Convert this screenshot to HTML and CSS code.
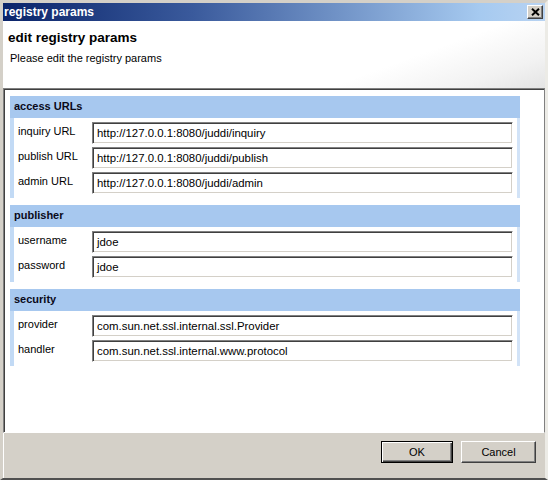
FILE: index.html
```html
<!DOCTYPE html>
<html>
<head>
<meta charset="utf-8">
<link rel="stylesheet" href="styles.css">
</head>
<body>
<div class="window">
  <div class="titlebar">
    <span class="title">registry params</span>
    <span class="close"><svg width="9" height="8" viewBox="0 0 9 8"><path d="M1 0.8 L8 7.2 M8 0.8 L1 7.2" stroke="#000" stroke-width="2" fill="none"/></svg></span>
  </div>
  <div class="header">
    <div class="heading">edit registry params</div>
    <div class="subheading">Please edit the registry params</div>
  </div>
  <div class="panel">
    <div class="section">
      <div class="band">access URLs</div>
      <div class="rows">
        <label>inquiry URL</label><div class="field">http://127.0.0.1:8080/juddi/inquiry</div>
        <label>publish URL</label><div class="field">http://127.0.0.1:8080/juddi/publish</div>
        <label>admin URL</label><div class="field">http://127.0.0.1:8080/juddi/admin</div>
      </div>
    </div>
    <div class="section">
      <div class="band">publisher</div>
      <div class="rows">
        <label>username</label><div class="field">jdoe</div>
        <label>password</label><div class="field">jdoe</div>
      </div>
    </div>
    <div class="section">
      <div class="band">security</div>
      <div class="rows">
        <label>provider</label><div class="field">com.sun.net.ssl.internal.ssl.Provider</div>
        <label>handler</label><div class="field">com.sun.net.ssl.internal.www.protocol</div>
      </div>
    </div>
  </div>
  <div class="footer">
    <button class="btn default">OK</button>
    <button class="btn">Cancel</button>
  </div>
</div>
</body>
</html>
```
FILE: styles.css
```css
html, body {
  margin: 0;
  padding: 0;
  background: #d4d0c8;
}
body {
  width: 548px;
  height: 480px;
  overflow: hidden;
  font-family: "Liberation Sans", Arial, sans-serif;
  font-size: 11px;
  color: #000;
}
.window {
  width: 548px;
  height: 480px;
  box-sizing: border-box;
  background: #d4d0c8;
  border-top: 3px solid #d4d0c8;
  border-left: 3px solid #d4d0c8;
  border-right: 3px solid #ecebe6;
  border-bottom: 2px solid #505050;
  box-shadow: inset 1px 0 0 #ffffff;
  display: flex;
  flex-direction: column;
}
.titlebar {
  height: 18px;
  flex: none;
  background: linear-gradient(to right, #0a246a 0%, #3a5a9c 35%, #a6caf0 88%, #b8d3f2 100%);
  display: flex;
  align-items: center;
  justify-content: space-between;
  padding: 0 2px 0 1px;
}
.title {
  color: #fff;
  font-weight: bold;
  font-size: 12px;
}
.close {
  width: 16px;
  height: 14px;
  box-sizing: border-box;
  background: #d4d0c8;
  border-top: 1px solid #ffffff;
  border-left: 1px solid #ffffff;
  border-right: 1px solid #404040;
  border-bottom: 1px solid #404040;
  box-shadow: inset -1px -1px 0 #808080;
  display: flex;
  align-items: center;
  justify-content: center;
}
.close svg { display: block; }
.header {
  height: 67px;
  flex: none;
  box-sizing: border-box;
  background: linear-gradient(160deg, #ffffff 70%, #f2f2f2 88%, #e4e4e4 100%);
  padding: 9px 5px 0 5px;
}
.heading {
  font-size: 13.5px;
  font-weight: bold;
  line-height: 16px;
}
.subheading {
  margin-top: 6px;
  margin-left: 2px;
  line-height: 13px;
}
.panel {
  height: 345px;
  flex: none;
  box-sizing: border-box;
  background: #ffffff;
  border-top: 1px solid #808080;
  border-left: 1px solid #808080;
  border-right: 1px solid #808080;
  border-bottom: 1px solid #ffffff;
  box-shadow: inset 1px 1px 0 #404040;
  padding: 7px 0 0 6px;
}
.section {
  width: 510px;
  margin-bottom: 7px;
}
.band {
  height: 22px;
  box-sizing: border-box;
  background: #a7c8ef;
  font-weight: bold;
  line-height: 20px;
  padding: 0 4px;
  color: #0a0a1a;
}
.rows {
  display: grid;
  grid-template-columns: 74px 1fr;
  row-gap: 3px;
  background: #ffffff;
  border-left: 4px solid #c2daf5;
  border-right: 3px solid #d2e3f7;
  padding: 4px 4px 4px 4px;
}
.rows label {
  align-self: start;
  padding-top: 3px;
  line-height: 13px;
}
.field {
  height: 22px;
  box-sizing: border-box;
  background: #fff;
  border-top: 1px solid #808080;
  border-left: 1px solid #808080;
  border-right: 1px solid #ffffff;
  border-bottom: 1px solid #ffffff;
  box-shadow: inset 1px 1px 0 #404040, inset -1px -1px 0 #d4d0c8;
  padding: 0 4px;
  font-size: 11.4px;
  line-height: 20px;
  white-space: nowrap;
  overflow: hidden;
}
.footer {
  flex: 1;
  display: flex;
  justify-content: flex-end;
  align-items: flex-start;
  gap: 8px;
  padding: 8px 9px 0 0;
}
.btn {
  width: 75px;
  height: 22px;
  box-sizing: border-box;
  font-family: "Liberation Sans", Arial, sans-serif;
  font-size: 11px;
  color: #000;
  background: #d4d0c8;
  border-top: 1px solid #ffffff;
  border-left: 1px solid #ffffff;
  border-right: 1px solid #404040;
  border-bottom: 1px solid #404040;
  box-shadow: inset -1px -1px 0 #808080;
  padding: 0;
  margin: 0;
}
.btn.default {
  width: 72px;
  border: 1px solid #000;
  box-shadow: inset 1px 1px 0 #ffffff, inset -1px -1px 0 #404040, inset -2px -2px 0 #808080;
}
```
